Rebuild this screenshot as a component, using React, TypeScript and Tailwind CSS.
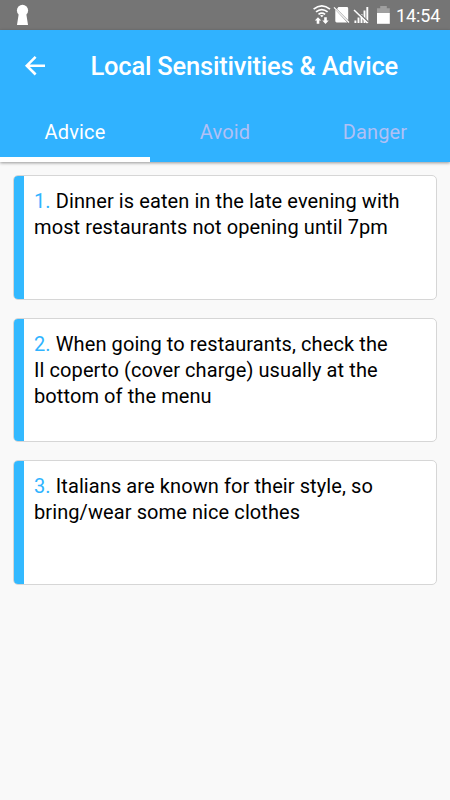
import { useState } from "react";

const tabs = ["Advice", "Avoid", "Danger"];

const tips = [
  ["Dinner is eaten in the late evening with", "most restaurants not opening until 7pm"],
  [
    "When going to restaurants, check the",
    "Il coperto (cover charge) usually at the",
    "bottom of the menu",
  ],
  ["Italians are known for their style, so", "bring/wear some nice clothes"],
];

function StatusBar() {
  return (
    <div className="flex h-[30px] items-center justify-between bg-[#757575] text-white">
      <svg width="50" height="30" viewBox="0 0 50 30" fill="#fff">
        <circle cx="22.5" cy="10.4" r="5.6" />
        <path d="M19 12h7l2 13H17z" />
      </svg>
      <div className="flex items-center">
        <svg width="84" height="30" viewBox="310 0 84 30" fill="none">
          {/* wifi with transfer arrows */}
          <g stroke="#fff" strokeWidth="1.7">
            <path d="M313.6 9.2q8.2-6.6 16.4 0" />
            <path d="M316 11.9q5.8-4.6 11.6 0" />
            <path d="M318.5 14.4q3.3-2.5 6.6 0" />
          </g>
          <path
            d="M320 15.6q1.8-1.2 3.6 0l-1.8 1.6zM318 17.3l3.2 3.3h-1.9v3.2h-2.6v-3.2h-1.9zM324.2 17.3h2.6v3.2h1.9l-3.2 3.4-3.2-3.4h1.9z"
            fill="#fff"
          />
          {/* no sim */}
          <path d="M338.4 7h8.4q1.4 0 1.4 1.4v11.8L337 9zM335.3 9.8l12 12.6h-10.6q-1.4 0-1.4-1.4z" fill="#fff" />
          <path d="M334 7.3l15 15.2" stroke="#fff" strokeWidth="1.2" />
          {/* no signal */}
          <path
            d="M355.4 23v-2.5M358.5 23v-5.5M361.5 23v-9M364.5 23v-12.5M367.3 23V7"
            stroke="#fff"
            strokeWidth="1.9"
          />
          <path d="M355 9.2l13.5 13" stroke="#757575" strokeWidth="1.4" />
          <path d="M354 10l13.5 13" stroke="#fff" strokeWidth="1.5" />
          {/* battery */}
          <path d="M377 8.2h3.2V6.1h6.6v2.1h3v5h-12.8z" fill="#9f9f9f" />
          <path d="M377 13h12.8v10.8H377z" fill="#fff" />
        </svg>
        <span className="ml-[2px] w-[54px] pt-[2px] text-[18px] leading-none tracking-[-0.1px] whitespace-nowrap">
          14:54
        </span>
      </div>
    </div>
  );
}

function TipCard({ index, lines }: { index: number; lines: string[] }) {
  return (
    <li className="flex h-[124.6px] overflow-hidden rounded-[5px] border border-[#d6d6d6] bg-white">
      <div className="w-[10px] shrink-0 bg-[#33b9ff]" />
      <p className="pt-[11.8px] pl-[10px] text-[20px] leading-[26.2px] tracking-[0.09px] whitespace-nowrap text-black">
        <span className="text-[#30b4ff]">{index}. </span>
        {lines.map((line) => (
          <span key={line}>
            {line}
            <br />
          </span>
        ))}
      </p>
    </li>
  );
}

export default function App() {
  const [active, setActive] = useState("Advice");

  return (
    <main className="h-screen overflow-hidden bg-[#f9f9f9] font-[Roboto,sans-serif]">
      <StatusBar />
      <header className="relative h-[132px] bg-[#30b2ff] shadow-[0_1px_3px_rgba(0,0,0,0.4)]">
        <div className="flex h-[72px] items-center">
          <button className="ml-[24px] w-[66.5px]" aria-label="Back">
            <svg width="22" height="22" viewBox="0 0 22 22" fill="none" stroke="#fff" strokeWidth="2.6">
              <path d="M21 10.7H3M11.6 1.9L2.8 10.7l8.8 8.8" />
            </svg>
          </button>
          <h1 className="pt-[2px] text-[25.5px] leading-none font-medium tracking-[-0.21px] whitespace-nowrap text-white">
            Local Sensitivities &amp; Advice
          </h1>
        </div>
        <nav className="flex h-[60px]">
          {tabs.map((tab) => (
            <button
              key={tab}
              onClick={() => setActive(tab)}
              className={`h-full flex-1 border-b-5 pt-1 text-[20px] tracking-[0.15px] ${
                active === tab ? "border-white text-white" : "border-transparent text-[#b1c0f5]"
              }`}>
              {tab}
            </button>
          ))}
        </nav>
      </header>
      <ul className="flex flex-col gap-[18px] px-[13px] pt-[13.2px]">
        {tips.map((lines, i) => (
          <TipCard key={i} index={i + 1} lines={lines} />
        ))}
      </ul>
    </main>
  );
}
